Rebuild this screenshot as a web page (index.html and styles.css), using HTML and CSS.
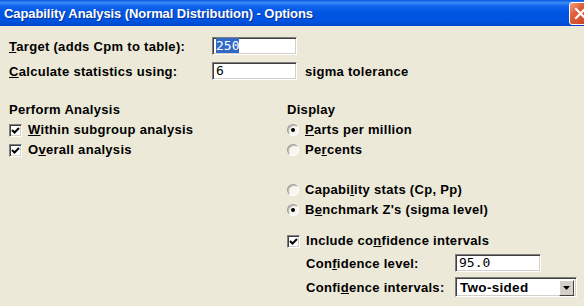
FILE: index.html
```html
<html lang="en">
<head>
    <meta charset="UTF-8">
    <title>Capability Analysis (Normal Distribution) - Options</title>
    <link rel="stylesheet" href="styles.css">
</head>
<body>
    <div class="window">
        <!-- Title bar -->
        <div class="titlebar">
            <span class="title">Capability Analysis (Normal Distribution) - Options</span>
            <span class="close">
                <svg width="21" height="21" viewBox="0 0 21 21">
                    <path d="M6 6 L15 15 M15 6 L6 15" stroke="#fff" stroke-width="2.2" stroke-linecap="square"/>
                </svg>
            </span>
        </div>

        <div class="content">
            <!-- Top fields -->
            <div class="top-rows">
                <span class="lbl"><u>T</u>arget (adds Cpm to table):</span>
                <span class="field"><span class="selected">250</span></span>
                <span></span>
                <span class="lbl"><u>C</u>alculate statistics using:</span>
                <span class="field">6</span>
                <span class="lbl suffix">sigma tolerance</span>
            </div>

            <div class="columns">
                <!-- Perform Analysis -->
                <div class="col">
                    <div class="heading">Perform Analysis</div>
                    <div class="opt"><span class="check"><svg width="9" height="9" viewBox="0 0 9 9"><path d="M1 4 L3.5 6.5 L8 2" fill="none" stroke="#000" stroke-width="2"/></svg></span><u>W</u>ithin subgroup analysis</div>
                    <div class="opt"><span class="check"><svg width="9" height="9" viewBox="0 0 9 9"><path d="M1 4 L3.5 6.5 L8 2" fill="none" stroke="#000" stroke-width="2"/></svg></span>O<u>v</u>erall analysis</div>
                </div>

                <!-- Display -->
                <div class="col">
                    <div class="heading">Display</div>
                    <div class="opt"><span class="radio on"></span><u>P</u>arts per million</div>
                    <div class="opt"><span class="radio"></span>Pe<u>r</u>cents</div>
                    <div class="opt spacer"></div>
                    <div class="opt"><span class="radio"></span>Capabi<u>l</u>ity stats (Cp, Pp)</div>
                    <div class="opt"><span class="radio on"></span>B<u>e</u>nchmark Z's (sigma level)</div>

                    <div class="opt include"><span class="check"><svg width="9" height="9" viewBox="0 0 9 9"><path d="M1 4 L3.5 6.5 L8 2" fill="none" stroke="#000" stroke-width="2"/></svg></span>Include co<u>n</u>fidence intervals</div>
                    <div class="sub-row">
                        <span class="lbl">Con<u>f</u>idence level:</span>
                        <span class="field small">95.0</span>
                    </div>
                    <div class="sub-row">
                        <span class="lbl">Confi<u>d</u>ence intervals:</span>
                        <span class="dropdown">
                            <span class="dd-text">Two-sided</span>
                            <span class="dd-btn"><svg width="7" height="4" viewBox="0 0 7 4"><path d="M0 0 H7 L3.5 4 Z" fill="#000"/></svg></span>
                        </span>
                    </div>
                </div>
            </div>
        </div>
    </div>
</body>
</html>
```

FILE: styles.css
```css
/* Global */
body {
    margin: 0;
    padding: 0;
    background: #ECE9D8;
    font-family: 'Liberation Sans', Arial, sans-serif;
    font-size: 13px;
    font-weight: bold;
    letter-spacing: 0.3px;
    color: #000;
}

.window {
    width: 584px;
    height: 306px;
    overflow: hidden;
    background: #ECE9D8;
}

/* Title bar */
.titlebar {
    height: 26px;
    display: flex;
    align-items: center;
    padding-left: 4px;
    overflow: hidden;
    background: linear-gradient(to bottom, #0958E0 0%, #3A8CF8 10%, #1466EE 22%, #0156E4 45%, #0053E0 80%, #0048CC 100%);
}

.title {
    color: #fff;
    font-family: 'Liberation Sans', Arial, sans-serif;
    font-size: 13px;
    font-weight: bold;
    letter-spacing: -0.08px;
    text-shadow: 1px 1px 0 #0A3296;
    white-space: nowrap;
}

.close {
    margin-left: auto;
    margin-right: -8px;
    width: 21px;
    height: 21px;
    flex-shrink: 0;
    border: 1px solid #fff;
    border-radius: 3px;
    background: linear-gradient(135deg, #F0A080 0%, #E0603A 35%, #C83C1C 100%);
}

.close svg {
    display: block;
}

/* Content */
.content {
    padding: 11px 0 0 9px;
}

.lbl {
    white-space: nowrap;
}

.top-rows {
    display: grid;
    grid-template-columns: 203px 85px auto;
    grid-auto-rows: 18px;
    row-gap: 7px;
    align-items: center;
}

.suffix {
    padding-left: 8px;
}

.field {
    height: 18px;
    box-sizing: border-box;
    background: #fff;
    border: 1px solid;
    border-color: #7F7F7F #FFFFFF #FFFFFF #7F7F7F;
    box-shadow: inset 1px 1px 0 #404040, inset -1px -1px 0 #D4D0C8;
    font-family: 'DejaVu Sans Mono', monospace;
    font-weight: normal;
    font-size: 13px;
    letter-spacing: 0;
    line-height: 16px;
    padding-left: 3px;
}

.selected {
    background: #316AC5;
    color: #fff;
}

/* Two columns */
.columns {
    display: grid;
    grid-template-columns: 278px 1fr;
    margin-top: 20px;
}

.heading {
    line-height: 20px;
}

.opt {
    display: flex;
    align-items: center;
    height: 20px;
    line-height: 20px;
    white-space: nowrap;
}

.spacer {
    height: 20px;
}

.include {
    margin-top: 11px;
}

.check {
    width: 13px;
    height: 13px;
    box-sizing: border-box;
    margin-right: 6px;
    flex-shrink: 0;
    background: #fff;
    border: 1px solid;
    border-color: #808080 #FFFFFF #FFFFFF #808080;
    box-shadow: inset 1px 1px 0 #404040, inset -1px -1px 0 #D4D0C8;
    display: flex;
    align-items: center;
    justify-content: center;
}

.radio {
    width: 12px;
    height: 12px;
    box-sizing: border-box;
    margin-right: 6px;
    flex-shrink: 0;
    border-radius: 50%;
    border: 1px solid;
    border-color: #9A9A9A #FFFFFF #FFFFFF #9A9A9A;
    background: #F6F5F0;
    box-shadow: inset 1px 1px 0 #B8B6AC;
    position: relative;
}

.radio.on::after {
    content: '';
    position: absolute;
    left: 3px;
    top: 3px;
    width: 4px;
    height: 4px;
    border-radius: 50%;
    background: #000;
}

/* Confidence sub rows */
.sub-row {
    display: grid;
    grid-template-columns: 149px auto;
    align-items: center;
    height: 24px;
    padding-left: 19px;
}

.sub-row:first-of-type {
    margin-top: 2px;
}

.field.small {
    width: 86px;
}

.dropdown {
    width: 122px;
    height: 20px;
    box-sizing: border-box;
    display: flex;
    background: #fff;
    border: 1px solid;
    border-color: #7F7F7F #FFFFFF #FFFFFF #7F7F7F;
    box-shadow: inset 1px 1px 0 #404040, inset -1px -1px 0 #D4D0C8;
    padding: 2px;
}

.dd-text {
    flex: 1;
    line-height: 16px;
    padding-left: 2px;
    font-size: 13.5px;
}

.dd-btn {
    width: 15px;
    height: 16px;
    box-sizing: border-box;
    background: #D4D0C8;
    border: 1px solid;
    border-color: #FFFFFF #404040 #404040 #FFFFFF;
    display: flex;
    align-items: center;
    justify-content: center;
}
```
